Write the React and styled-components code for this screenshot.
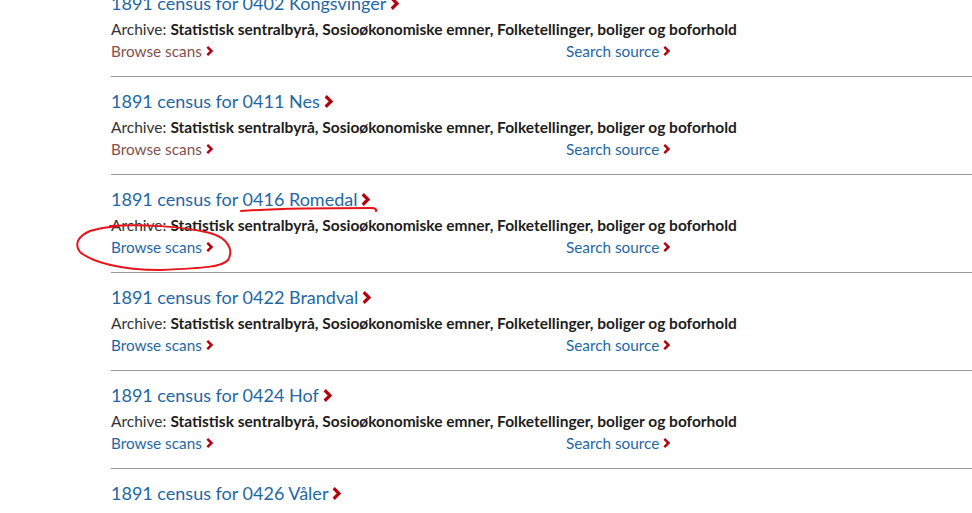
import React from "react";
import styled, { createGlobalStyle } from "styled-components";

const Global = createGlobalStyle`
  html, body { margin: 0; padding: 0; background: #fff; overflow: hidden; }
  body { font-family: "Lato", "Open Sans", sans-serif; }
`;

const Page = styled.div`
  position: relative;
  width: 972px;
  height: 513px;
  overflow: hidden;
`;

const List = styled.ul`
  list-style: none;
  margin: -21px 0 0 111px;
  padding: 0;
`;

const Item = styled.li`
  padding: 12px 0 14px;
  border-bottom: 1px solid #9a9a9a;
`;

const Title = styled.a`
  display: inline-flex;
  align-items: center;
  gap: 4px;
  height: 24px;
  font-size: 18px;
  line-height: 24px;
  color: #1f68a4;
  text-decoration: none;
`;

const Archive = styled.div`
  margin-top: 3px;
  font-size: 15.5px;
  line-height: 22px;
  color: #333;
  white-space: nowrap;
  b { font-weight: 700; color: #1d1d1d; }
`;

const Links = styled.div`
  display: grid;
  grid-template-columns: 455px 1fr;
  font-size: 15.3px;
  line-height: 22px;
`;

const LinkText = styled.a`
  display: inline-flex;
  align-items: center;
  gap: 4px;
  color: ${(p) => (p.$visited ? "#85504e" : "#1f68a4")};
  text-decoration: none;
  justify-self: start;
`;

const Chevron = ({ w = 8, h = 11 }) => (
  <svg width={w} height={h} viewBox="0 0 8 11" preserveAspectRatio="none" aria-hidden="true">
    <path d="M1.5 1 L6.2 5.5 L1.5 10" fill="none" stroke="#b5000f" strokeWidth="2.8" strokeLinejoin="miter" />
  </svg>
);

const Annotation = styled.svg`
  position: absolute;
  left: 0;
  top: 0;
  pointer-events: none;
`;

const rows = [
  { code: "0402 Kongsvinger", visited: true },
  { code: "0411 Nes", visited: true },
  { code: "0416 Romedal" },
  { code: "0422 Brandval" },
  { code: "0424 Hof" },
  { code: "0426 Våler" },
];

export default function App() {
  return (
    <Page>
      <Global />
      <List>
        {rows.map((r) => (
          <Item key={r.code}>
            <Title href="#">
              <span>1891 census for {r.code}</span>
              <Chevron w={9} h={13} />
            </Title>
            <Archive>
              Archive: <b>Statistisk sentralbyrå, Sosioøkonomiske emner, Folketellinger, boliger og boforhold</b>
            </Archive>
            <Links>
              <LinkText href="#" $visited={r.visited}>
                Browse scans <Chevron w={7} h={10} />
              </LinkText>
              <LinkText href="#">
                Search source <Chevron w={7} h={10} />
              </LinkText>
            </Links>
          </Item>
        ))}
      </List>
      <Annotation width="972" height="513" viewBox="0 0 972 513">
        <path
          d="M241 211 C 280 208, 330 208, 372 208 C 375 208, 377 210, 376 211"
          fill="none"
          stroke="#e8141b"
          strokeWidth="2"
          strokeLinecap="round"
        />
        <path
          d="M110 226 C 140 224, 180 226, 210 233 C 228 238, 234 250, 228 260 C 222 267, 205 268, 160 270 C 120 270, 92 262, 80 252 C 74 244, 78 236, 90 231 C 100 228, 108 227, 118 226"
          fill="none"
          stroke="#e8141b"
          strokeWidth="2"
          strokeLinecap="round"
        />
      </Annotation>
    </Page>
  );
}
